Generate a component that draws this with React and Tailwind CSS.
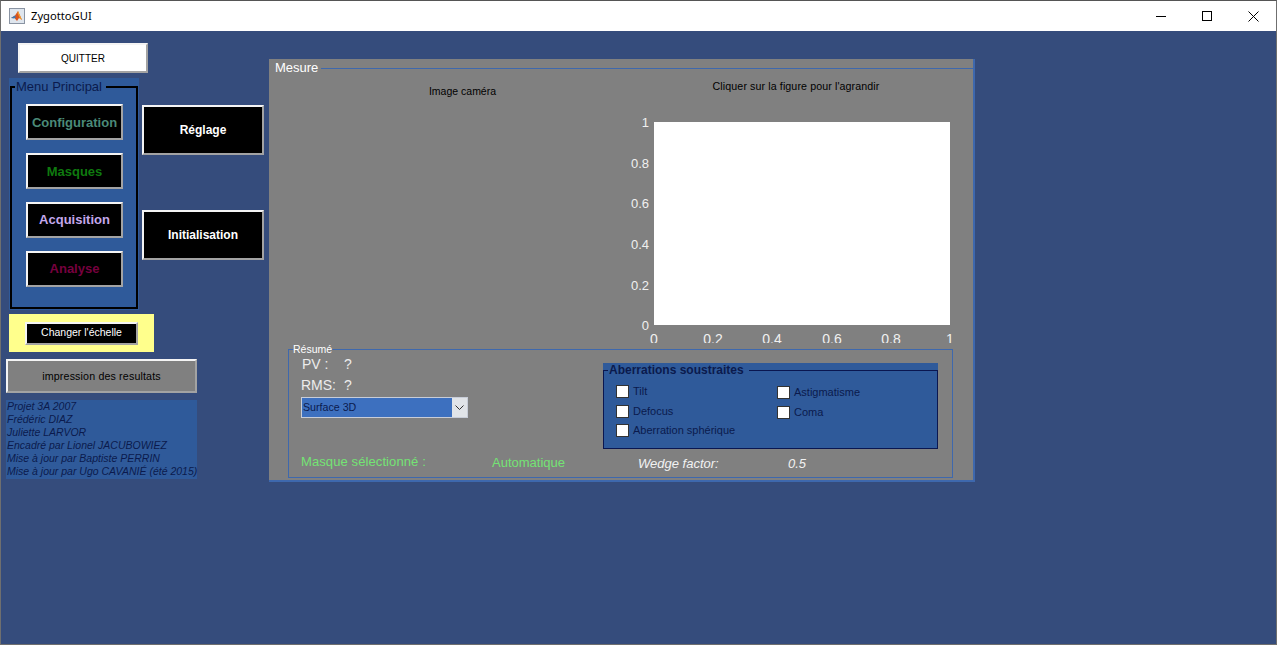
const arial = { fontFamily: '"Liberation Sans", Arial, sans-serif' };

// raised MATLAB-style push button
function Btn({ className = '', children }) {
  return (
    <div className={`flex items-center justify-center border-2 border-t-[#f4f4f4] border-l-[#f4f4f4] border-b-[#a3a3a3] border-r-[#a3a3a3] ${className}`}>
      {children}
    </div>
  );
}

function Check({ label, className = 'h-[20px]' }) {
  return (
    <div className={`flex items-center gap-[3px] ${className}`}>
      <span className="w-[13px] h-[13px] bg-white border border-[#333] shrink-0" />
      <span className="text-[11px] text-[#0b1a4d] ml-[1px]">{label}</span>
    </div>
  );
}

function MatlabLogo() {
  return (
    <svg width="16" height="16" viewBox="0 0 16 16">
      <rect x="0.5" y="0.5" width="15" height="15" fill="#dfe6ee" stroke="#8a94a3" />
      <path d="M2 10 L6 7.5 L9 3 L13 12 L10 10 L8 13 L5.5 10 Z" fill="#d9541e" />
      <path d="M2 10 L6 7.5 L7 9.5 L5 10.5 Z" fill="#3d78b5" />
      <path d="M9 3 L13 12 L11 10.5 L8.5 5 Z" fill="#f0a030" />
    </svg>
  );
}

function Chart() {
  const ys = [['1', 122], ['0.8', 163], ['0.6', 203], ['0.4', 244], ['0.2', 285], ['0', 325]];
  const xs = [['0', 654], ['0.2', 713], ['0.4', 772], ['0.6', 832], ['0.8', 891], ['1', 950]];
  return (
    <svg width="340" height="233" viewBox="620 110 340 233" className="block" style={arial}>
      <rect x="654" y="122" width="296" height="203" fill="#fff" />
      {ys.map(([t, y]) => (
        <text key={t} x="649" y={y + 5} textAnchor="end" fontSize="13" fill="#f0f0f0">{t}</text>
      ))}
      {/* the lower edge of these labels is hidden in the original too */}
      {xs.map(([t, x]) => (
        <text key={t} x={x} y={344} textAnchor="middle" fontSize="14" fill="#f0f0f0">{t}</text>
      ))}
    </svg>
  );
}

export default function App() {
  return (
    <div className="w-[1277px] h-[645px] overflow-hidden flex flex-col bg-[#354c7c] border-x border-b border-[#6f6f6f] border-t border-t-[#555]" style={arial}>
      {/* title bar */}
      <div className="h-[30px] shrink-0 bg-white flex items-center pl-[8px]">
        <MatlabLogo />
        <span className="ml-[6px] text-[11.2px] text-black" style={{ fontFamily: '"Noto Sans", sans-serif' }}>ZygottoGUI</span>
        <div className="ml-auto flex items-center h-full">
          <div className="w-[46px] flex justify-center">
            <span className="w-[10px] h-px bg-black" />
          </div>
          <div className="w-[46px] flex justify-center">
            <span className="w-[10px] h-[10px] border border-black" />
          </div>
          <div className="w-[46px] flex justify-center">
            <svg width="11" height="11" viewBox="0 0 11 11"><path d="M0.5 0.5 L10.5 10.5 M10.5 0.5 L0.5 10.5" stroke="#000" strokeWidth="1" fill="none" /></svg>
          </div>
        </div>
      </div>

      <div className="flex flex-1">
        {/* left column */}
        <div className="w-[268px] shrink-0">
          <Btn className="ml-[17px] mt-[12px] w-[130px] h-[30px] bg-white text-[10px] text-black">QUITTER</Btn>

          <div className="flex mt-[5px]">
            <div className="ml-[8px] w-[130px] h-[232px] bg-[#2f5a9a] pt-[1px]">
              <fieldset className="ml-[1px] w-[128px] border-2 border-black h-[230px]">
                <legend className="ml-[3px] px-[1px] pr-[4px] text-[13px] leading-[16px] text-[#0b1a4d] whitespace-nowrap">Menu Principal</legend>
                <div className="flex flex-col gap-[13px] pt-[9px] pl-[14px]">
                  <Btn className="w-[97px] h-[36px] pt-px bg-black text-[13px] font-bold text-[#4b8a78]">Configuration</Btn>
                  <Btn className="w-[97px] h-[36px] pt-px bg-black text-[13px] font-bold text-[#0f7a0f]">Masques</Btn>
                  <Btn className="w-[97px] h-[36px] bg-black text-[13px] font-bold text-[#c4a8ec]">Acquisition</Btn>
                  <Btn className="w-[97px] h-[36px] bg-black text-[13px] font-bold text-[#77003f]">Analyse</Btn>
                </div>
              </fieldset>
            </div>
            <div className="ml-[3px] pt-[27px] flex flex-col gap-[55px]">
              <Btn className="w-[122px] h-[50px] bg-black text-[12px] font-bold text-white">Réglage</Btn>
              <Btn className="w-[122px] h-[50px] bg-black text-[12px] font-bold text-white">Initialisation</Btn>
            </div>
          </div>

          <div className="ml-[8px] mt-[4px] w-[145px] h-[38px] bg-[#ffff8c] flex items-center justify-center">
            <Btn className="w-[113px] h-[23px] bg-black text-[10.5px] text-white">Changer l'échelle</Btn>
          </div>

          <Btn className="ml-[5px] mt-[7px] w-[191px] h-[34px] bg-[#808080] text-[10.67px] text-black tracking-[0.15px]">impression des resultats</Btn>

          <div className="ml-[5px] mt-[7px] w-[191px] h-[79px] bg-[#2f5a9a] pl-[1px] text-[10.5px] leading-[13px] italic text-[#0b1a4d] whitespace-nowrap">
            <div>Projet 3A 2007</div>
            <div>Frédéric DIAZ</div>
            <div>Juliette LARVOR</div>
            <div>Encadré par Lionel JACUBOWIEZ</div>
            <div>Mise à jour par Baptiste PERRIN</div>
            <div>Mise à jour par Ugo CAVANIÉ (été 2015)</div>
          </div>
        </div>

        {/* Mesure panel */}
        <div className="mt-[28px] w-[706px] h-[423px] bg-[#808080] border-r-2 border-b-2 border-[#3e68ad]">
          <fieldset className="border-t border-[#3e68ad] mt-[2px]">
            <legend className="pl-[6px] pr-[3px] text-[13px] leading-[14px] text-white">Mesure</legend>
            <div className="flex h-[281px]">
              <div className="w-[351px] pl-[36px]">
                <div className="pt-[10px] text-center text-[10.5px] leading-[12px] text-black">Image caméra</div>
              </div>
              <div className="w-[340px]">
                <div className="pt-[5px] h-[35px] text-center text-[10.67px] leading-[12px] text-black pl-[12px] tracking-[0.1px] box-border">Cliquer sur la figure pour l'agrandir</div>
                <Chart />
              </div>
            </div>

            <fieldset className="ml-[19px] w-[665px] h-[134px] border border-[#3e68ad] -mt-[12px]">
              <legend className="ml-[4px] text-[10.5px] leading-[11px] text-white">Résumé</legend>
              <div className="flex h-full">
                <div className="w-[314px] pl-[12px] pt-[1px] flex flex-col">
                  <div className="flex text-[14px] leading-[16px] text-[#ececec] pl-[1px]">
                    <span className="w-[42px]">PV :</span><span>?</span>
                  </div>
                  <div className="flex text-[14px] leading-[16px] text-[#ececec] mt-[5px]">
                    <span className="w-[43px]">RMS:</span><span>?</span>
                  </div>
                  <div className="mt-[4px] w-[167px] h-[21px] flex bg-[#3d70bf] border border-[#c8cdd8]">
                    <span className="flex-1 pl-[1px] text-[10.67px] leading-[19px] text-[#0b1a4d]">Surface 3D</span>
                    <span className="w-[15px] bg-[#e1e4e8] flex items-center justify-center">
                      <svg width="9" height="6" viewBox="0 0 9 6"><path d="M0.5 0.5 L4.5 4.5 L8.5 0.5" stroke="#333" fill="none" /></svg>
                    </span>
                  </div>
                  <div className="mt-[36px] flex text-[13px] leading-[16px] text-[#74e374]">
                    <span className="w-[191px] tracking-[0.1px]">Masque sélectionné :</span>
                    <span className="mt-px">Automatique</span>
                  </div>
                </div>

                <div className="flex flex-col">
                  <div className="w-[335px] h-[86px] mt-[8px] bg-[#2f5a9a]">
                    <fieldset className="border border-[#0a1650] h-[86px]">
                      <legend className="ml-[4px] pl-[1px] pr-[5px] text-[12px] leading-[14px] font-bold text-[#0b1a4d]">Aberrations soustraites</legend>
                      <div className="flex pt-[4px] pl-[12px]">
                        <div className="w-[161px]">
                          <Check label="Tilt" />
                          <Check label="Defocus" />
                          <Check label="Aberration sphérique" className="h-[19px]" />
                        </div>
                        <div className="pt-[1px]">
                          <Check label="Astigmatisme" />
                          <Check label="Coma" />
                        </div>
                      </div>
                    </fieldset>
                  </div>
                  <div className="flex pl-[35px] mt-[7px] text-[13px] leading-[16px] italic text-[#f2f2f2]">
                    <span className="w-[150px]">Wedge factor:</span>
                    <span>0.5</span>
                  </div>
                </div>
              </div>
            </fieldset>
          </fieldset>
        </div>
      </div>
    </div>
  );
}
